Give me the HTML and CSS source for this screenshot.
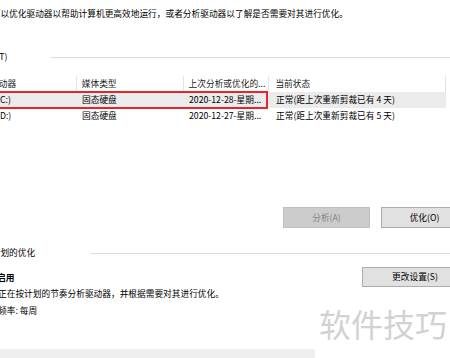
FILE: index.html
```html
<!DOCTYPE html>
<html lang="zh-CN">
<head>
<meta charset="utf-8">
<title>优化驱动器</title>
<link rel="stylesheet" href="styles.css">
</head>
<body>
<div class="page">
  <p class="desc">你可以优化驱动器以帮助计算机更高效地运行，或者分析驱动器以了解是否需要对其进行优化。</p>

  <div class="group-title status-title">
    <span class="group-label">状态(T)</span>
    <span class="group-line"></span>
  </div>

  <div class="drive-list">
    <div class="row header">
      <div class="cell c-name">驱动器</div>
      <div class="cell c-media">媒体类型</div>
      <div class="cell c-date">上次分析或优化的...</div>
      <div class="cell c-status">当前状态</div>
    </div>
    <div class="row item selected">
      <div class="cell c-name"><span class="drive">(C:)</span></div>
      <div class="cell c-media">固态硬盘</div>
      <div class="cell c-date">2020-12-28-星期...</div>
      <div class="cell c-status">正常(距上次重新剪裁已有 4 天)</div>
      <div class="highlight"></div>
    </div>
    <div class="row item">
      <div class="cell c-name"><span class="drive">(D:)</span></div>
      <div class="cell c-media">固态硬盘</div>
      <div class="cell c-date">2020-12-27-星期...</div>
      <div class="cell c-status">正常(距上次重新剪裁已有 5 天)</div>
    </div>
  </div>

  <div class="actions">
    <button class="btn disabled" disabled>分析(A)</button>
    <button class="btn">优化(O)</button>
  </div>

  <div class="group-title sched-title">
    <span class="group-label">已计划的优化</span>
    <span class="group-line"></span>
  </div>

  <div class="sched">
    <div class="sched-head">
      <span class="sched-on">启用</span>
      <button class="btn wide">更改设置(S)</button>
    </div>
    <p class="sched-text">正在按计划的节奏分析驱动器，并根据需要对其进行优化。</p>
    <p class="sched-text freq">频率: 每周</p>
  </div>

  <div class="bottom-bar"></div>
</div>
<div class="watermark">软件技巧</div>
</body>
</html>
```

FILE: styles.css
```css
html, body {
  margin: 0;
  padding: 0;
  background: #ffffff;
}

body {
  width: 450px;
  height: 358px;
  overflow: hidden;
  position: relative;
  font-family: "Noto Sans CJK SC", "Microsoft YaHei", sans-serif;
  font-size: 8.7px;
  color: #000000;
}

.page {
  margin-left: -17px;
  width: 485px;
  padding-top: 8px;
}

.desc {
  margin: 0;
  line-height: 12px;
  white-space: nowrap;
}

.group-title {
  display: flex;
  align-items: center;
  height: 12px;
  line-height: 12px;
}

.group-line {
  flex: 1;
  height: 1px;
  background: #dcdcdc;
}

.status-title {
  margin-top: 31px;
}

.status-title .group-label {
  margin-left: -4px;
}

.status-title .group-line {
  margin-left: 43px;
}

.drive-list {
  margin-top: 13px;
  width: 463px;
}

.row {
  display: flex;
  height: 16px;
  line-height: 16px;
  position: relative;
}

.cell {
  white-space: nowrap;
  overflow: hidden;
}

.c-name { width: 94px; padding-left: 7px; box-sizing: border-box; }
.c-media { width: 107px; padding-left: 5px; box-sizing: border-box; }
.c-date { width: 86px; padding-left: 5px; box-sizing: border-box; }
.c-status { width: 176px; padding-left: 6px; box-sizing: border-box; }

.header .cell {
  color: #1a1a1a;
}

.header .c-name,
.header .c-media,
.header .c-date {
  border-right: 1px solid #e5e5e5;
}

.header {
  border-right: 1px solid #e5e5e5;
}

.item .c-name .drive {
  margin-left: 7px;
}

.item.selected {
  background: #ebebeb;
}

.highlight {
  position: absolute;
  left: -4px;
  top: -1px;
  width: 289px;
  height: 18px;
  border: 2px solid #e2262b;
  box-sizing: border-box;
}

.actions {
  display: flex;
  justify-content: flex-end;
  gap: 11px;
  margin-top: 83px;
}

.btn {
  font-family: inherit;
  font-size: 8.7px;
  height: 21px;
  width: 87px;
  padding: 0;
  margin: 0;
  background: #e1e1e1;
  border: 1px solid #adadad;
  color: #000000;
  line-height: 19px;
}

.btn.disabled {
  background: #cccccc;
  border-color: #bfbfbf;
  color: #838383;
}

.btn.wide {
  width: 106px;
  height: 20px;
  line-height: 18px;
}

.sched-title {
  margin-top: 19px;
}

.sched-title .group-line {
  margin-left: 56px;
}

.sched {
  padding-left: 14px;
}

.sched-head {
  display: flex;
  justify-content: space-between;
  align-items: center;
  margin-top: 8px;
  height: 20px;
}

.sched-on {
  font-weight: bold;
}

.sched-text {
  margin: 1px 0 0;
  padding-left: 1px;
  line-height: 12px;
  white-space: nowrap;
}

.sched-text.freq {
  margin-top: 5px;
}

.bottom-bar {
  margin-top: 32px;
  width: 332px;
  height: 12px;
  background: #efefef;
}

.watermark {
  position: absolute;
  left: 319px;
  top: 303px;
  font-size: 32px;
  line-height: 40px;
  color: #d2d2d2;
  letter-spacing: 0;
  white-space: nowrap;
}
```
